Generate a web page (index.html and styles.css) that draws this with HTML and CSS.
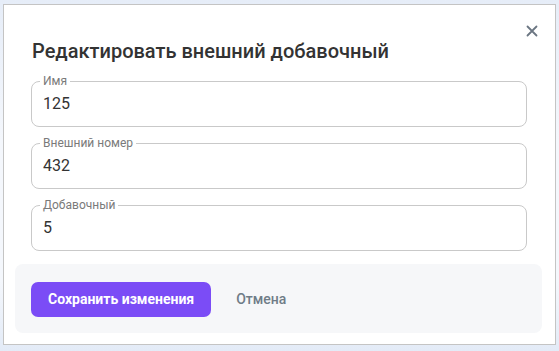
FILE: index.html
```html
<!DOCTYPE html>
<html lang="ru">
<head>
	<meta charset="UTF-8">
	<meta name="viewport" content="width=device-width, initial-scale=1.0">
	<title>Редактировать внешний добавочный</title>
	<link rel="stylesheet" href="styles.css">
</head>
<body>
	<div class="dialog">
		<button class="closeBtn" aria-label="Закрыть">
			<svg width="12" height="12" viewBox="0 0 12 12">
				<path d="M1.5 1.5 L10.5 10.5 M10.5 1.5 L1.5 10.5" stroke="#6b7682" stroke-width="1.8" stroke-linecap="round" />
			</svg>
		</button>
		<div class="body">
			<h2 class="title">Редактировать внешний добавочный</h2>
			<fieldset class="field">
				<legend>Имя</legend>
				<input type="text" value="125" />
			</fieldset>
			<fieldset class="field">
				<legend>Внешний номер</legend>
				<input type="text" value="432" />
			</fieldset>
			<fieldset class="field">
				<legend>Добавочный</legend>
				<input type="text" value="5" />
			</fieldset>
		</div>
		<div class="foot">
			<button class="saveBtn">Сохранить изменения</button>
			<button class="cancelBtn">Отмена</button>
		</div>
	</div>
</body>
</html>
```

FILE: styles.css
```css
* {
	box-sizing: border-box;
	font-family: Roboto, "Liberation Sans", sans-serif;
}

body {
	margin: 0;
	height: 351px;
	background: linear-gradient(180deg, #e6edf8 0%, #f4f7fc 40%, #f4f7fc 80%, #e3ebf7 100%);
	overflow: hidden;
}

.dialog {
	position: relative;
	width: 553px;
	height: 341px;
	margin: 4px 0 0 3px;
	background: #fff;
	border: 1px solid #c4c4c4;
	padding: 0 11px;
}

.closeBtn {
	position: absolute;
	top: 20px;
	right: 17px;
	width: 12px;
	height: 12px;
	padding: 0;
	border: none;
	background: transparent;
	cursor: pointer;
}

.closeBtn svg {
	display: block;
}

.body {
	padding: 34px 17px 0 16px;
}

.title {
	margin: 0 0 12px 1px;
	font-size: 20px;
	line-height: 24px;
	font-weight: 500;
	color: #333;
}

.field {
	margin: 0 0 10px;
	padding: 0 8px 10px;
	border: 1px solid #c9c9c9;
	border-radius: 8px;
	min-width: 0;
}

.field:last-child {
	margin-bottom: 0;
}

.field legend {
	padding: 0 3px;
	font-size: 12px;
	line-height: 13px;
	color: #7a7a7a;
}

.field input {
	display: block;
	width: 100%;
	height: 26px;
	margin-top: 2px;
	padding: 0 3px;
	border: none;
	outline: none;
	font-size: 16px;
	color: #333;
	background: transparent;
}

.foot {
	display: flex;
	align-items: center;
	gap: 13px;
	height: 69px;
	margin-top: 13px;
	margin-right: 2px;
	padding: 1px 16px 0;
	background: #f6f7f9;
	border-radius: 8px;
}

.saveBtn {
	height: 35px;
	padding: 0 17px;
	border: none;
	border-radius: 7px;
	background: #7b4cf6;
	color: #fff;
	font-size: 14px;
	font-weight: 700;
	cursor: pointer;
}

.cancelBtn {
	height: 35px;
	padding: 0 12px;
	border: none;
	background: transparent;
	color: #6f7c87;
	font-size: 14px;
	font-weight: 500;
	cursor: pointer;
}
```
